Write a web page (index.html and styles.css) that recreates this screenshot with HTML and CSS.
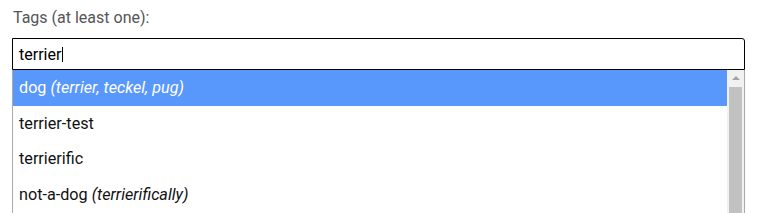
FILE: index.html
```html
<!DOCTYPE html>
<html>
<head>
<meta charset="utf-8">
<link rel="stylesheet" href="styles.css">
</head>
<body>
<div class="field">
  <div class="label">Tags (at least one):</div>
  <div class="input"><span class="value">terrier</span><span class="caret"></span></div>
  <div class="dropdown">
    <ul class="options">
      <li class="option highlighted">dog <em>(terrier, teckel, pug)</em></li>
      <li class="option">terrier-test</li>
      <li class="option">terrierific</li>
      <li class="option">not-a-dog <em>(terrierifically)</em></li>
    </ul>
    <div class="scrollbar">
      <div class="arrow"></div>
      <div class="thumb"></div>
    </div>
  </div>
</div>
</body>
</html>
```
FILE: styles.css
```css
html, body {
  margin: 0;
  padding: 0;
  background: #fff;
  overflow: hidden;
}
body {
  font-family: Roboto, "Liberation Sans", sans-serif;
  font-size: 16px;
}
.field {
  padding: 0 21px 0 12px;
}
.label {
  color: #555;
  height: 38px;
  line-height: 36px;
  padding-left: 1px;
}
.input {
  height: 30px;
  border: 1px solid #000;
  border-radius: 0 3px 0 0;
  display: flex;
  align-items: center;
  padding: 0 6px;
  color: #000;
}
.caret {
  display: inline-block;
  width: 1px;
  height: 15px;
  background: #000;
  margin-left: 1px;
}
.dropdown {
  display: flex;
  border-left: 1px solid #aaa;
  border-right: 1px solid #aaa;
  height: 180px;
}
.options {
  list-style: none;
  margin: 0;
  padding: 0;
  flex: 1;
}
.option {
  height: 35.5px;
  line-height: 35.5px;
  padding-left: 6px;
  color: #111;
  font-size: 16.2px;
}
.option em {
  font-style: italic;
}
.highlighted {
  background: #5897fb;
  color: #fff;
}
.scrollbar {
  width: 17px;
  background: #f1f1f1;
  display: flex;
  flex-direction: column;
  align-items: center;
}
.arrow {
  margin-top: 6px;
  width: 0;
  height: 0;
  border-left: 4px solid transparent;
  border-right: 4px solid transparent;
  border-bottom: 4px solid #a3a3a3;
}
.thumb {
  margin-top: 7px;
  width: 13px;
  flex: 1;
  background: #c1c1c1;
}
```
